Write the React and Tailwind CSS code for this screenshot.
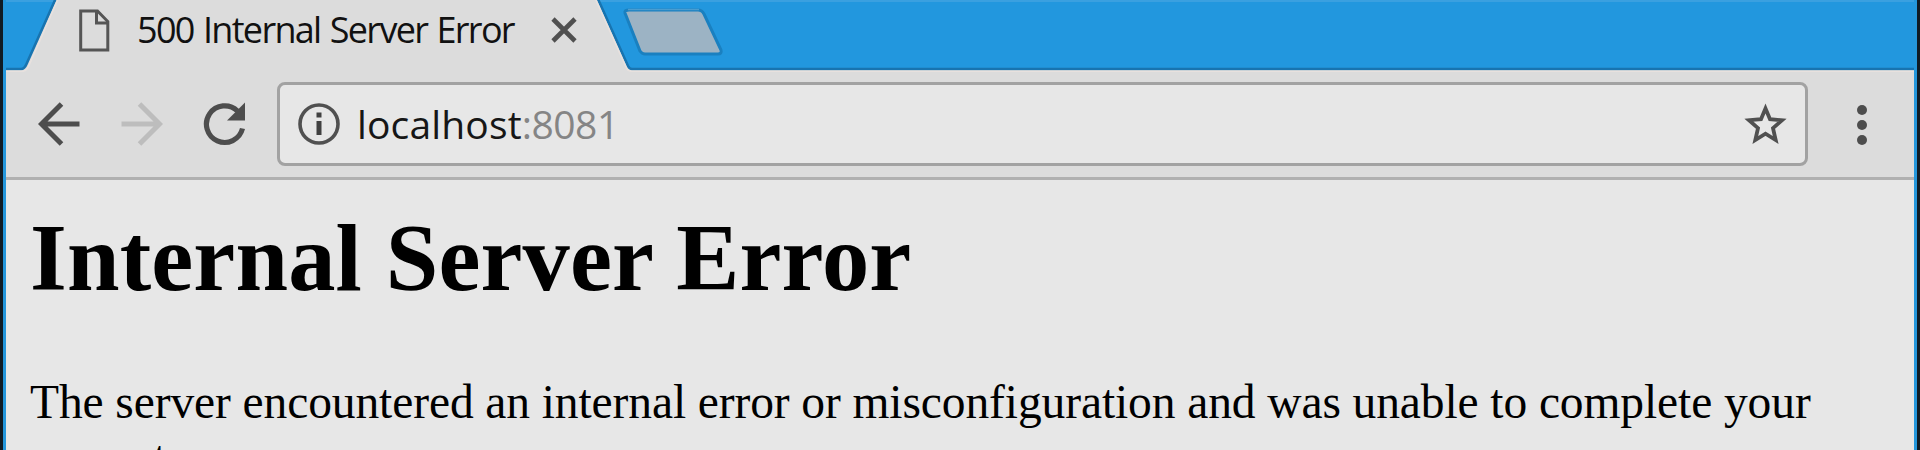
function TabStrip() {
  return (
    <div className="relative flex h-[72px] w-full shrink-0 items-start bg-[#2297de]">
      <svg className="absolute inset-0" width="1908" height="72" viewBox="6 0 1908 72" fill="none">
        <path d="M6 0H1914V2H6Z" fill="#3aa0e0" />
        <path d="M56 -2L26.500 64Q24.500 69 21 69H6V72H1914V69H632Q629.500 69 628 66L597.500 -2Z" fill="#dcdcdc" />
        <path d="M56 -2L26.500 64Q24.500 69 21 69H6M1914 69H632Q629.500 69 628 66L597.500 -2" stroke="#1874b0" strokeWidth="2.600" />
        <path d="M58.500 -2L29 65.500Q26.500 71 23 71.200H6M1914 71.200H631Q627.500 71 626 67L595 -2" stroke="#e8e1de" strokeWidth="1.600" />
        <path d="M629 10H698Q702 10 704 14L721 50Q722 54 718 54H645Q642 54 640 51L625 13Q624 10 629 10Z" fill="#9cb3c4" stroke="#1a80c0" strokeWidth="3" />
        <path d="M628 9.500H699" stroke="#4a9dd0" strokeWidth="1.500" />
      </svg>
      <div className="relative flex h-[60px] items-center pl-[73px]">
        <svg width="31" height="43" viewBox="0 0 31 43" fill="none" stroke="#555" strokeWidth="3">
          <path d="M1.700 2H18.500L28.800 12.500V41H1.700Z" />
          <path d="M17.500 2V14H28.800" />
        </svg>
        <span className="ml-[27px] w-[378px] whitespace-nowrap font-['Open_Sans','Noto_Sans',sans-serif] text-[36px] leading-[60px] tracking-[-1.7px] [word-spacing:1.7px] text-[#111]">500 Internal Server Error</span>
        <svg className="ml-[36px]" width="26" height="26" viewBox="0 0 26 26" fill="none" stroke="#505050" strokeWidth="4.600">
          <path d="M2 2L24 24M24 2L2 24" />
        </svg>
      </div>
    </div>
  );
}

function Toolbar() {
  return (
    <div className="flex h-[108px] shrink-0 items-start border-b-[3px] border-[#b0b0b0] bg-[#dcdcdc] pt-[10px]">
      <div className="flex h-[84px] items-center pl-8">
        <svg width="42" height="44" viewBox="0 0 42 44" fill="none" stroke="#4d4d4d" strokeWidth="5">
          <path d="M41.500 22H4M23.500 2L3.500 22L23.500 42" />
        </svg>
        <svg className="ml-[41px]" width="42" height="44" viewBox="0 0 42 44" fill="none" stroke="#bdbdbd" strokeWidth="5">
          <path d="M.500 22H38M18.500 2L38.500 22L18.500 42" />
        </svg>
        <svg className="ml-[40px]" width="43" height="44" viewBox="0 0 43 44" fill="none">
          <path d="M39.500 26.500A18.300 18.300 0 1 1 34.500 9" stroke="#4d4d4d" strokeWidth="5.200" />
          <path d="M42 .500V18.500H24Z" fill="#4d4d4d" />
        </svg>
      </div>
      <div className="ml-[31px] flex h-[84px] w-[1531px] items-center rounded-[8px] border-[3px] border-[#a2a2a2] bg-[#e7e7e7] pl-[18px] pr-[18px]">
        <svg width="42" height="42" viewBox="0 0 42 42" fill="none">
          <circle cx="21" cy="21" r="19" stroke="#505050" strokeWidth="3.600" />
          <path d="M18.500 9.500H23.500V14.500H18.500ZM18.500 18H23.500V32H18.500Z" fill="#404040" />
        </svg>
        <div className="ml-[17px] whitespace-nowrap font-['Open_Sans','Noto_Sans',sans-serif] text-[39px] leading-[78px] tracking-[0.15px] text-[#161616]">
          localhost<span className="tracking-[-0.5px] text-[#858585]">:8081</span>
        </div>
        <svg className="ml-auto" width="43" height="43" viewBox="0 0 43 43" fill="none" stroke="#505050" strokeWidth="3.800">
          <path d="M21.500 5.500L26 16.200L38 17.200L29 25.100L31.700 37L21.500 30.700L11.300 37L14 25.100L5 17.200L17 16.200Z" />
        </svg>
      </div>
      <div className="ml-[49px] mt-[1px] flex h-[84px] flex-col items-center justify-center gap-[5px]">
        <i className="size-[10px] rounded-full bg-[#4d4d4d]" />
        <i className="size-[10px] rounded-full bg-[#4d4d4d]" />
        <i className="size-[10px] rounded-full bg-[#4d4d4d]" />
      </div>
    </div>
  );
}

export default function App() {
  return (
    <div className="flex h-[450px] w-[1920px] overflow-hidden border-x-[3px] border-[#101b24] bg-[#e7e7e7]">
      <div className="flex w-full flex-col border-x-[3px] border-[#2497dc]">
        <TabStrip />
        <Toolbar />
        <main className="shrink-0 px-6 font-['Liberation_Serif',serif] text-black">
          <h1 className="mt-[23px] whitespace-nowrap text-[94.500px] font-bold leading-[110px] tracking-[0.15px]">Internal Server Error</h1>
          <p className="mt-[61px] text-[47.500px] leading-[56px] tracking-[-0.1px]">
            <span className="whitespace-nowrap">The server encountered an internal error or misconfiguration and was unable to complete your</span>
            <br />
            request.
          </p>
        </main>
      </div>
    </div>
  );
}
